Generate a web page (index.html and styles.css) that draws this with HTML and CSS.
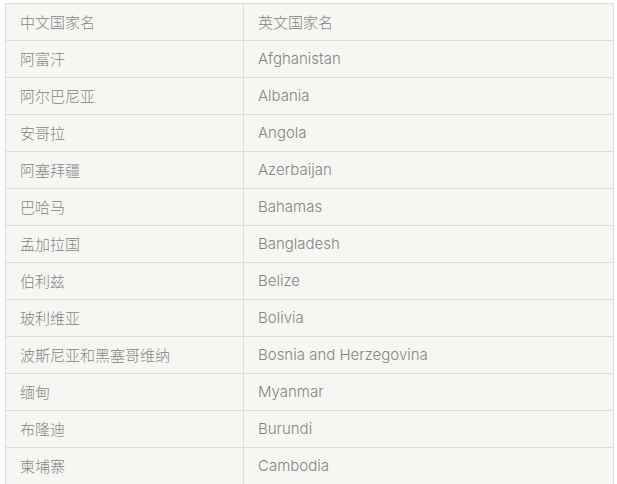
FILE: index.html
```html
<!DOCTYPE html>
<html lang="zh">
<head>
<meta charset="utf-8">
<link rel="stylesheet" href="styles.css">
</head>
<body>
<div class="wrap">
<table class="countries">
<tbody>
<tr><td class="c1">中文国家名</td><td>英文国家名</td></tr>
<tr><td class="c1">阿富汗</td><td>Afghanistan</td></tr>
<tr><td class="c1">阿尔巴尼亚</td><td>Albania</td></tr>
<tr><td class="c1">安哥拉</td><td>Angola</td></tr>
<tr><td class="c1">阿塞拜疆</td><td>Azerbaijan</td></tr>
<tr><td class="c1">巴哈马</td><td>Bahamas</td></tr>
<tr><td class="c1">孟加拉国</td><td>Bangladesh</td></tr>
<tr><td class="c1">伯利兹</td><td>Belize</td></tr>
<tr><td class="c1">玻利维亚</td><td>Bolivia</td></tr>
<tr><td class="c1">波斯尼亚和黑塞哥维纳</td><td>Bosnia and Herzegovina</td></tr>
<tr><td class="c1">缅甸</td><td>Myanmar</td></tr>
<tr><td class="c1">布隆迪</td><td>Burundi</td></tr>
<tr><td class="c1">柬埔寨</td><td>Cambodia</td></tr>
</tbody>
</table>
</div>
</body>
</html>
```
FILE: styles.css
```css
html, body {
  margin: 0;
  padding: 0;
  background: #ffffff;
}
.wrap {
  padding: 3px 3px 0 5px;
}
.countries {
  border-collapse: collapse;
  width: 609px;
  background: #f7f6f3;
  font-family: Inter, "Noto Sans CJK SC", sans-serif;
  font-weight: 300;
  font-size: 15px;
  color: #858585;
}
.countries td {
  border: 1px solid #dcdcdc;
  height: 37px;
  padding: 0 0 2px 14px;
  box-sizing: border-box;
  vertical-align: middle;
  text-align: left;
}
.countries td.c1 {
  width: 238px;
}
```
